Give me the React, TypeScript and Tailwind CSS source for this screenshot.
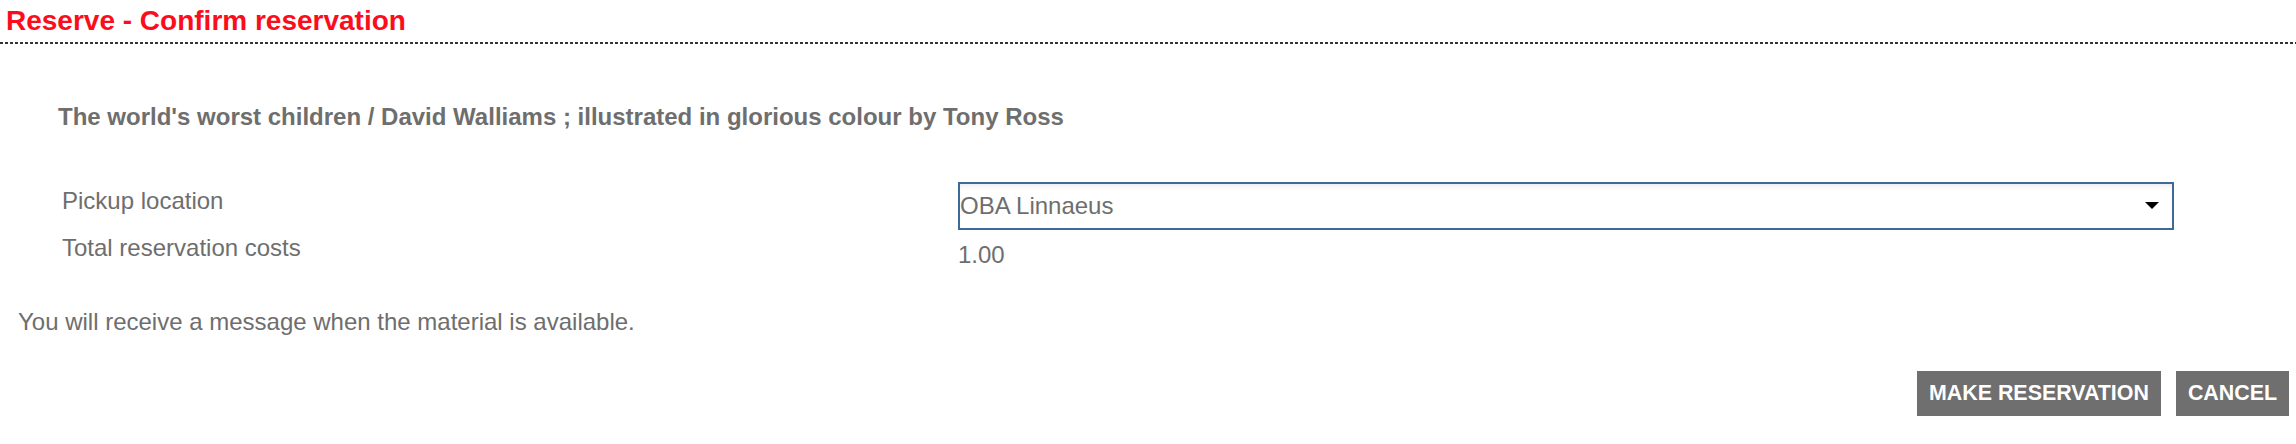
import React from "react";

export default function App() {
  return (
    <div className="w-full bg-white font-['Liberation_Sans',Arial,sans-serif]">
      <h1 className="pl-[6px] pt-[5px] text-[28px] font-bold leading-[32px] text-[#fc0d1b]">
        Reserve - Confirm reservation
      </h1>
      <div className="mt-[5px] h-[2px] w-full bg-[linear-gradient(to_right,#333_0_3px,transparent_3px_5px)] bg-[length:5px_2px]" />

      <p className="mt-[59px] pl-[58px] text-[24px] font-bold leading-[28px] text-[#6e6e6e]">
        The world's worst children / David Walliams ; illustrated in glorious colour by Tony Ross
      </p>

      <div className="mt-[51px] grid grid-cols-[896px_1216px] pl-[62px] text-[24px] leading-[24px] text-[#6e6e6e]">
        <div className="pt-[7px]">Pickup location</div>
        <div className="flex h-[48px] items-center justify-between border-2 border-[#3e6a9a] bg-white shadow-[inset_0_5px_6px_-3px_rgba(0,0,0,0.09)]">
          <span>OBA Linnaeus</span>
          <svg width="14" height="7" viewBox="0 0 14 7" className="mr-[13px] mt-[-1px]">
            <path d="M0 0H14L7 7Z" fill="#000" />
          </svg>
        </div>
        <div className="pt-[6px]">Total reservation costs</div>
        <div className="pt-[13px]">1.00</div>
      </div>

      <p className="mt-[43px] pl-[18px] text-[24px] leading-[24px] text-[#6e6e6e]">
        You will receive a message when the material is available.
      </p>

      <div className="mt-[37px] flex justify-end gap-[15px] pr-[7px]">
        <button className="flex h-[45px] items-center bg-[#6f6f6f] px-[12px] text-[21.4px] font-bold text-white">
          MAKE RESERVATION
        </button>
        <button className="flex h-[45px] items-center bg-[#6f6f6f] px-[12px] text-[21.4px] font-bold text-white">
          CANCEL
        </button>
      </div>
    </div>
  );
}
